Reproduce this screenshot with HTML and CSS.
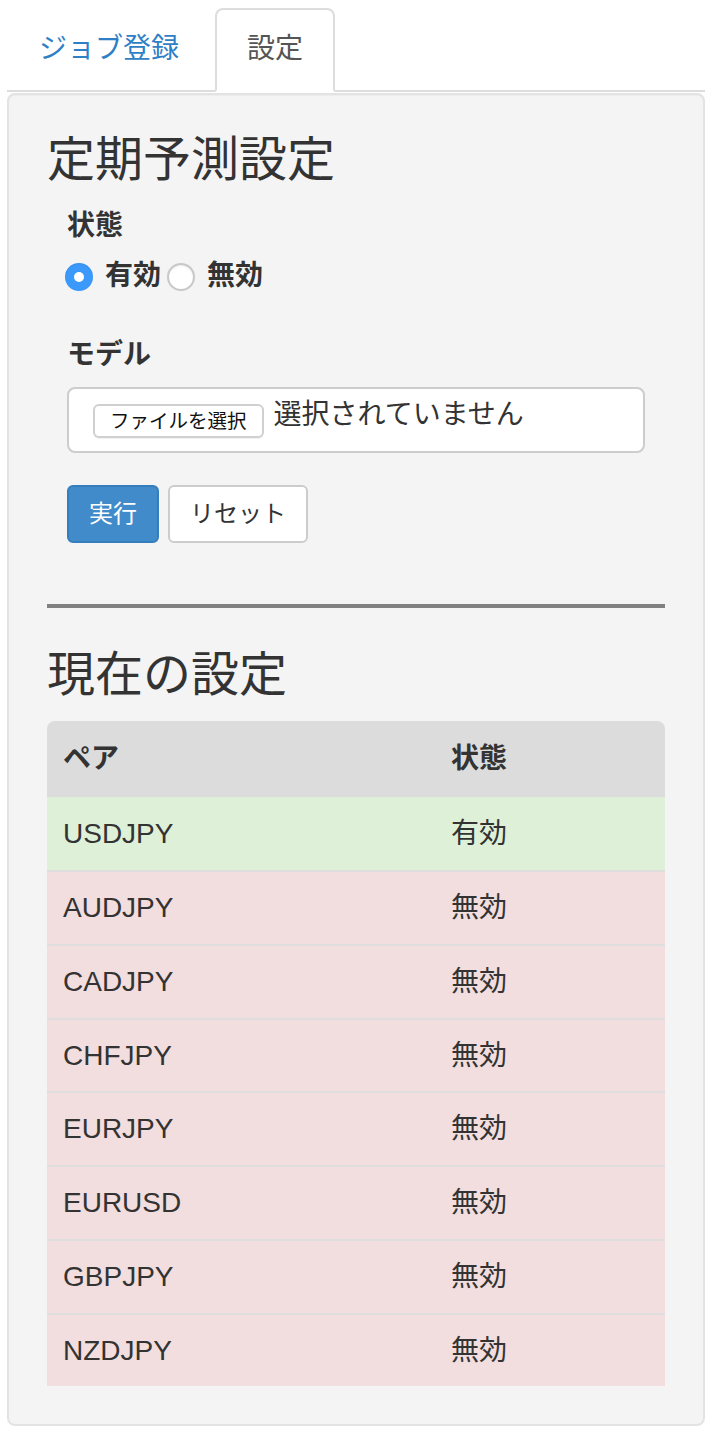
FILE: index.html
```html
<!DOCTYPE html>
<html lang="ja">
<head>
<meta charset="utf-8">
<title>設定</title>
<link rel="stylesheet" href="styles.css">
</head>
<body>
<div class="page">
  <ul class="tabs">
    <li class="tab"><a class="tab-link" href="#">ジョブ登録</a></li>
    <li class="tab active"><a class="tab-link" href="#">設定</a></li>
  </ul>
  <div class="well">
    <h3 class="heading">定期予測設定</h3>
    <form class="form">
      <div class="label">状態</div>
      <div class="radios">
        <span class="radio checked"></span><span class="radio-text">有効</span>
        <span class="radio"></span><span class="radio-text">無効</span>
      </div>
      <div class="label label-model">モデル</div>
      <div class="file-box">
        <span class="file-btn">ファイルを選択</span>
        <span class="file-name">選択されていません</span>
      </div>
      <div class="actions">
        <span class="btn btn-primary">実行</span>
        <span class="btn btn-default">リセット</span>
      </div>
    </form>
    <hr class="divider">
    <h3 class="heading">現在の設定</h3>
    <table class="table">
      <thead>
        <tr><th class="col-pair">ペア</th><th>状態</th></tr>
      </thead>
      <tbody>
        <tr class="on"><td>USDJPY</td><td>有効</td></tr>
        <tr class="off"><td>AUDJPY</td><td>無効</td></tr>
        <tr class="off"><td>CADJPY</td><td>無効</td></tr>
        <tr class="off"><td>CHFJPY</td><td>無効</td></tr>
        <tr class="off"><td>EURJPY</td><td>無効</td></tr>
        <tr class="off"><td>EURUSD</td><td>無効</td></tr>
        <tr class="off"><td>GBPJPY</td><td>無効</td></tr>
        <tr class="off"><td>NZDJPY</td><td>無効</td></tr>
      </tbody>
    </table>
  </div>
</div>
</body>
</html>
```
FILE: styles.css
```css
* { box-sizing: border-box; }
html, body {
  margin: 0;
  padding: 0;
  background: #fff;
}
body {
  font-family: "Liberation Sans", "Noto Sans CJK JP", sans-serif;
  font-size: 28px;
  line-height: 40px;
  color: #333;
}
.page {
  padding: 8px 7px 0;
}
.tabs {
  list-style: none;
  margin: 0;
  padding: 0;
  display: flex;
  border-bottom: 2px solid #ddd;
}
.tab {
  margin-right: 4px;
  margin-bottom: -2px;
}
.tab-link {
  display: block;
  padding: 19px 30px 21px;
  border: 2px solid transparent;
  border-radius: 8px 8px 0 0;
  color: #2f7fc6;
  text-decoration: none;
}
.tab.active .tab-link {
  background: #fff;
  color: #555;
  border-color: #ddd;
  border-bottom-color: transparent;
}
.well {
  margin-top: 1px;
  background: #f4f4f4;
  border: 2px solid #e3e3e3;
  border-radius: 8px;
  padding: 38px;
  box-shadow: inset 0 1px 1px rgba(0,0,0,0.03);
}
.heading {
  margin: 0 0 20px;
  font-size: 48px;
  line-height: 53px;
  font-weight: 400;
}
.form {
  padding-left: 20px;
}
.label {
  font-weight: 700;
  margin-bottom: 10px;
}
.label-model {
  margin-top: 39px;
  margin-bottom: 12px;
}
.radios {
  display: flex;
  align-items: center;
  height: 40px;
}
.radio {
  width: 28px;
  height: 28px;
  border-radius: 50%;
  background: #fff;
  border: 2px solid #c8c8c8;
  box-shadow: inset 0 1px 2px rgba(0,0,0,0.08);
  flex: none;
  margin-top: 2px;
}
.radio:first-child { margin-left: -2px; }
.radio.checked {
  background: #3b99fc;
  border: none;
  position: relative;
}
.radio.checked::after {
  content: "";
  position: absolute;
  left: 9px;
  top: 9px;
  width: 10px;
  height: 10px;
  border-radius: 50%;
  background: #fff;
}
.radio-text {
  font-weight: 700;
  margin: 0 6px 0 12px;
}
.file-box {
  height: 66px;
  width: 578px;
  background: #fff;
  border: 2px solid #ccc;
  border-radius: 8px;
  display: flex;
  align-items: flex-start;
  padding: 15px 24px 0;
}
.file-btn {
  font-size: 19.5px;
  line-height: 30px;
  height: 34px;
  padding: 0 15px;
  border: 2px solid #d0d0d0;
  border-radius: 6px;
  background: #fff;
  color: #111;
  box-shadow: 0 1px 1px rgba(0,0,0,0.06);
}
.file-name {
  font-size: 28px;
  line-height: 30px;
  margin-left: 10px;
  margin-top: -4px;
  color: #333;
}
.actions {
  display: flex;
  gap: 9px;
  margin-top: 32px;
}
.btn {
  display: inline-block;
  font-size: 24px;
  padding: 10px 20px;
  border: 2px solid #ccc;
  border-radius: 6px;
  line-height: 34px;
}
.btn-primary {
  background: #428bca;
  border-color: #357ebd;
  color: #fff;
}
.btn-default {
  background: #fff;
  color: #333;
}
.divider {
  margin: 61px 0 40px;
  border: 0;
  border-top: 4px solid #808080;
}
.table {
  width: 100%;
  border-collapse: separate;
  border-spacing: 0;
}
.table th {
  text-align: left;
  font-weight: 700;
  background: #dcdcdc;
  padding: 18px 16px;
}
.table th:first-child { border-top-left-radius: 8px; }
.table th:last-child { border-top-right-radius: 8px; }
.col-pair { width: 388px; }
.table td {
  padding: 16px 16px 15.75px;
  border-top: 2px solid #dedede;
}
.table tbody tr:first-child td { border-top: 0; padding-top: 17px; padding-bottom: 16px; }
.on td { background: #dff0d8; }
.off td { background: #f2dede; }
```
